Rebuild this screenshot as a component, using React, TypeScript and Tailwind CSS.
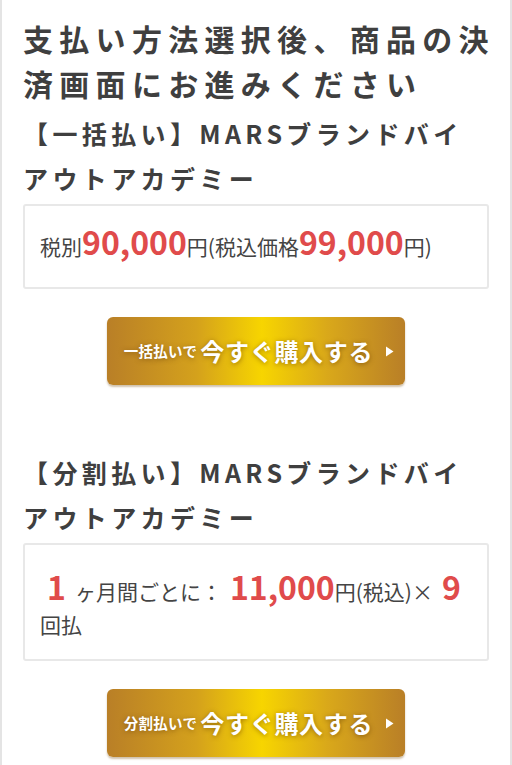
const font = {
  fontFamily: '"Noto Sans CJK JP", "Noto Sans", sans-serif',
};

function BuyButton({ label }: { label: string }) {
  return (
    <div className="mt-[28px] flex justify-center">
      <a
        href="#"
        className="flex h-[68px] w-[298px] items-center justify-center rounded-[6px] bg-[linear-gradient(90deg,#b97f27_0%,#d4a11c_30%,#f7d500_52%,#d9a81a_74%,#b97f27_100%)] pl-[6px] text-white shadow-[0_2px_2px_rgba(120,80,20,0.35)] [text-shadow:0_1px_5px_rgba(90,50,0,0.55)]"
      >
        <span className="text-[14.5px] font-bold tracking-[0.02em]">{label}</span>
        <span className="ml-[3px] text-[24px] font-bold tracking-[0.03em]">
          今すぐ購入する
        </span>
        <svg width="9" height="11" viewBox="0 0 9 11" className="ml-[12px]">
          <path d="M1 0.5 L8.5 5.5 L1 10.5 Z" fill="#fff" />
        </svg>
      </a>
    </div>
  );
}

function PlanTitle({ kind, className }: { kind: string; className: string }) {
  return (
    <h3
      className={`pr-[12px] text-[25px] font-bold leading-[45px] tracking-[0.175em] text-[#3f3f3f] ${className}`}
    >
      {`【${kind}】MARSブランドバイアウトアカデミー`}
    </h3>
  );
}

export default function App() {
  return (
    <div
      style={font}
      className="min-h-screen border-x-2 border-[#e4e4e4] bg-white px-[21px] pt-[16px] text-[#3f3f3f]"
    >
      <h2 className="-mr-[20px] text-[30px] font-bold leading-[45px] tracking-[0.21em]">
        支払い方法選択後、商品の決済画面にお進みください
      </h2>

      {/* 一括払い */}
      <PlanTitle kind="一括払い" className="mt-[5px]" />
      <div className="mt-[3px] rounded-[3px] border-2 border-[#e8e8e8] px-[15px] py-[17px] text-[21px] leading-[47px] text-[#444]">
        税別
        <span className="text-[32px] font-bold leading-none text-[#e04b4b]">90,000</span>
        円(税込価格
        <span className="text-[32px] font-bold leading-none text-[#e04b4b]">99,000</span>
        円)
      </div>
      <BuyButton label="一括払いで" />

      {/* 分割払い */}
      <PlanTitle kind="分割払い" className="mt-[65px]" />
      <div className="mt-[3px] rounded-[3px] border-2 border-[#e8e8e8] px-[15px] pb-[19px] pt-[18px] text-[21px] leading-[31px] text-[#444]">
        <span className="ml-[7px] mr-[9px] text-[32px] font-bold leading-[46px] text-[#e04b4b]">
          1
        </span>
        ヶ月間ごとに：
        <span className="ml-[8px] text-[32px] font-bold leading-[46px] text-[#e04b4b]">
          11,000
        </span>
        円(税込)×
        <span className="ml-[9px] mr-[9px] text-[32px] font-bold leading-[46px] text-[#e04b4b]">
          9
        </span>
        回払
      </div>
      <BuyButton label="分割払いで" />
      <div className="h-[40px]" />
    </div>
  );
}
